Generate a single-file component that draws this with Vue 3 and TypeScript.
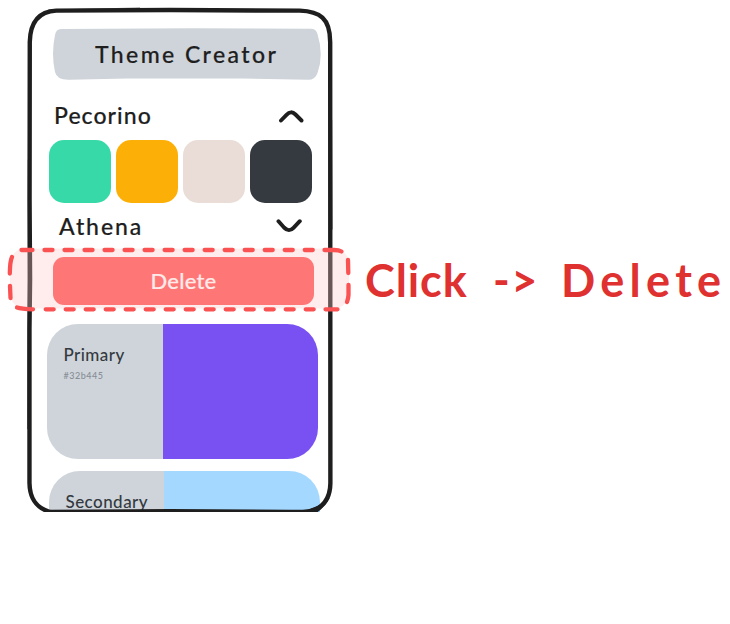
<script setup lang="ts">
interface Swatch { name: string; color: string }
interface Role { label: string; hex: string; kind: string }

const swatches: Swatch[] = [
  { name: 'green', color: '#38d9a9' },
  { name: 'amber', color: '#fcb007' },
  { name: 'cream', color: '#eaddd7' },
  { name: 'slate', color: '#343a40' },
]
const roles: Role[] = [
  { label: 'Primary', hex: '#32b445', kind: 'primary' },
  { label: 'Secondary', hex: '', kind: 'secondary' },
]
</script>

<template>
  <main class="board">
    <section class="phone">
      <header class="title-bar">
        <svg class="title-shape" viewBox="0 0 270 52" aria-hidden="true">
          <path d="M9 1 L140 .2 L259 .7 Q264 .8 265.500 6 Q272 27 265.500 45 Q263 52 256 51.800 L190 50.500 L75 50.500 L18 51.800 Q5 52.500 3 44 Q-1 26 3 7 Q4 1 9 1Z" fill="#ced4da" />
        </svg>
        <h1 class="title">Theme Creator</h1>
      </header>

      <div class="theme-row pecorino">
        <h2>Pecorino</h2>
        <svg width="26" height="16" viewBox="0 0 26 16" aria-hidden="true">
          <path d="M3 13.500 L8.500 7.800 Q13 3 17.500 7.500 L23.500 13.500" />
        </svg>
      </div>

      <div class="swatches">
        <div v-for="s in swatches" :key="s.name" class="swatch" :style="{ background: s.color }"></div>
      </div>

      <div class="theme-row athena">
        <h2>Athena</h2>
        <svg width="26" height="16" viewBox="0 0 26 16" aria-hidden="true">
          <path d="M2.500 3.200 L8 9.500 Q13 14.500 17.500 9.800 L23.800 3.200" />
        </svg>
      </div>

      <button class="delete"><span>Delete</span></button>

      <article v-for="r in roles" :key="r.label" class="role" :class="r.kind">
        <div class="info">
          <h3>{{ r.label }}</h3>
          <p v-if="r.hex">{{ r.hex }}</p>
        </div>
        <div class="tone"></div>
      </article>
    </section>

    <p class="note"><span class="click">Click</span><span class="arrow">-&gt;</span><span class="target">Delete</span></p>

    <svg class="frame" width="340" height="513" viewBox="0 0 340 513" aria-hidden="true">
      <path d="M56 10.700 L170 10 L300 10.700 C320 11.500 330.500 18 330.500 42 L330.700 484 C330.500 500 323 509.500 309 513 L290 513 L170 512.300 L50 513 C36 509 29.500 500 29.200 484 L29.200 330 L29.800 280 L29.300 200 L29.500 42 C30 22 39 11.500 56 10.700Z" />
      <path class="thin" d="M48 10 L140 8 M28 160 L27.200 430 M332 120 L332.500 230" />
      <path class="corner" d="M327 500 Q320 509 303 511 L303 513 H318 Q326 507 330 499Z" />
    </svg>

    <svg class="highlight" width="360" height="320" viewBox="0 0 360 320" aria-hidden="true">
      <rect x="10" y="248.500" width="339" height="60" rx="15" />
      <path d="M21.500 250 H32.500" />
      <path d="M44.500 250 H320" stroke-dasharray="8 12.020" />
      <path d="M324.500 250 H334 Q339 250 341.500 251.500" />
      <path d="M12 257 Q10 261 9.800 273.500 M10 286 L10.500 298" />
      <path d="M17 307.500 Q21 309 33 309.300" />
      <path d="M45.700 309.300 H319" stroke-dasharray="8 12" />
      <path d="M325.500 309.300 H337.500 M348 260 L348.300 273 M348.500 285 V295 Q348.200 299 347 302" />
    </svg>
  </main>
</template>

<style>
body { background: #fff; }
</style>

<style scoped>
.board {
  position: relative;
  display: flex;
  width: 730px;
  height: 624px;
  overflow: hidden;
  font-family: Lato, "Open Sans", sans-serif;
  color: #1e1e1e;
}
h1, h2, h3, p { margin: 0; font-weight: 500; white-space: nowrap; }
h1, h2 { -webkit-text-stroke: .200px currentColor; }
.phone {
  box-sizing: border-box;
  display: flex;
  flex-direction: column;
  flex: none;
  width: 333px;
  height: 512px;
  padding: 28px 0 0 47px;
  overflow: hidden;
}
.title-bar {
  display: grid;
  flex: none;
  width: 270px;
  height: 52px;
  margin-left: 4.500px;
}
.title-shape, .title { grid-area: 1 / 1; }
.title-shape { width: 270px; height: 52px; }
.title {
  padding-left: 43.500px;
  font-size: 23px;
  line-height: 52px;
  letter-spacing: 2.400px;
}
.theme-row {
  display: flex;
  flex: none;
  align-items: center;
  justify-content: space-between;
}
.theme-row h2 { font-size: 23px; line-height: 30px; }
.theme-row svg { fill: none; stroke: #1e1e1e; stroke-width: 3.900; stroke-linecap: round; }
.pecorino { width: 250px; height: 30px; margin: 20px 0 9.700px 7px; }
.pecorino h2 { letter-spacing: 1.050px; }
.athena { width: 242.500px; height: 30px; margin: 8.500px 0 15.500px 12px; }
.athena h2 { letter-spacing: 1.900px; }
.swatches { display: flex; flex: none; gap: 5.300px; margin-left: 1.600px; }
.swatch { width: 62px; height: 63px; border-radius: 15px; }
.delete {
  position: relative;
  z-index: 3;
  flex: none;
  width: 261px;
  height: 48px;
  margin-left: 6px;
  padding: 0;
  border: 0;
  border-radius: 11px;
  background: #ff7676;
  color: #ffeaea;
  font: 500 22px/48px Lato, sans-serif;
  letter-spacing: .200px;
  -webkit-text-stroke: .200px currentColor;
}
.role {
  display: flex;
  flex: none;
  width: 271px;
  height: 135px;
  margin-top: 19px;
  overflow: hidden;
  border-radius: 31px;
}
.info { box-sizing: border-box; width: 116px; padding: 19.500px 0 0 16.500px; background: #ced4da; }
.info h3 { font-size: 17px; line-height: 24px; color: #343a40; letter-spacing: .450px; }
.info p { padding-top: 3px; font-size: 9px; line-height: 12px; color: #868e96; letter-spacing: .500px; }
.tone { flex: 1; background: #7950f2; }
.secondary { margin: 12px 0 0 2px; }
.secondary .info { width: 115px; padding-top: 19px; }
.secondary .tone { background: #a5d8ff; }
.note {
  display: flex;
  width: 365px;
  height: 60px;
  margin: 250px 0 0 32px;
  font-size: 45px;
  line-height: 60px;
  font-weight: 700;
  color: #e03131;
}
.click { width: 128px; letter-spacing: .900px; }
.arrow { width: 68px; letter-spacing: 1.500px; }
.target { letter-spacing: 5.300px; }
.frame, .highlight { position: absolute; top: 0; left: 0; pointer-events: none; }
.frame { z-index: 1; height: 512px; width: 340px; overflow: hidden; fill: none; stroke: #1e1e1e; stroke-width: 4.400; }
.frame .thin { stroke-width: .600; }
.frame .corner { fill: #1e1e1e; stroke: none; }
.highlight { z-index: 2; fill: none; stroke: #fa5252; stroke-width: 4.300; stroke-linecap: round; }
.highlight rect { fill: rgba(255, 201, 201, .330); stroke: none; }
</style>
